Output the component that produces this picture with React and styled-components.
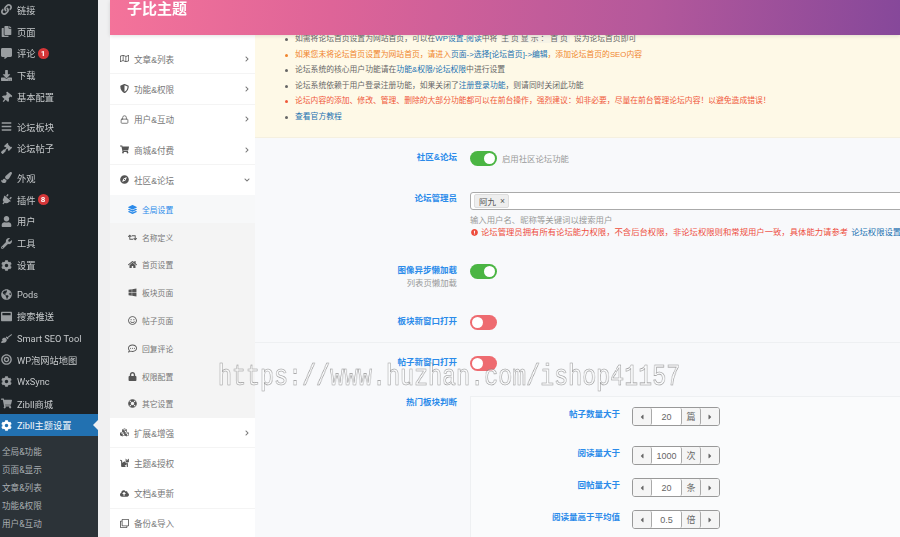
import React from 'react'
import styled, { createGlobalStyle } from 'styled-components'
import {
  FaLink, FaCopy, FaCommentAlt, FaDownload, FaThumbtack, FaBars, FaGavel, FaPaintBrush, FaPlug,
  FaUser, FaWrench, FaCog, FaGlobeAmericas, FaWindowMaximize, FaBroom, FaBullseye, FaShoppingCart,
  FaRegMap, FaShieldAlt, FaLock, FaCompass, FaRetweet, FaHome, FaWindows, FaRegSmile,
  FaRegCommentDots, FaLifeRing, FaCubes, FaCat, FaCloudUploadAlt, FaRegClone,
  FaChevronRight, FaChevronDown, FaCaretLeft, FaCaretRight, FaExclamationCircle, FaLayerGroup
} from 'react-icons/fa'
import { FiLock } from 'react-icons/fi'

const sans = `"Liberation Sans", "Noto Sans CJK SC", sans-serif`

const GlobalStyle = createGlobalStyle`
  html, body {
    margin: 0;
    padding: 0;
    height: 537px;
    overflow: hidden;
    background: #f0f0f1;
    font-family: ${sans};
  }
`

const Page = styled.div`
  position: relative;
  display: flex;
  width: 900px;
  height: 537px;
  overflow: hidden;
  filter: blur(0.35px);
`

const AdminMenu = styled.nav`
  width: 98px;
  flex: none;
  height: 537px;
  overflow: hidden;
  background: #1d2327;
  font-family: Roboto, "Noto Sans CJK SC", sans-serif;
  font-size: 9.25px;
`

const MenuList = styled.div`
  margin-top: -1px;
`

const MenuItem = styled.div`
  position: relative;
  display: flex;
  align-items: center;
  height: 21.8px;
  margin-top: ${p => (p.$gap ? '7.7px' : '0')};
  color: ${p => (p.$active ? '#f2f6fa' : '#c6c9cb')};
  background: ${p => (p.$active ? '#2271b1' : 'transparent')};
  white-space: nowrap;
`

const MenuIcon = styled.span`
  display: flex;
  justify-content: center;
  width: 12px;
  margin: 0 5px 0 0;
  color: ${p => (p.$active ? '#fff' : '#999da0')};
  font-size: 11px;
  transform: rotate(${p => (p.$tilt ? '40deg' : '0')});
`

const Badge = styled.span`
  display: inline-flex;
  align-items: center;
  justify-content: center;
  width: 11px;
  height: 11px;
  margin-left: 2px;
  border-radius: 50%;
  background: #d63638;
  color: #fff;
  font-size: 8px;
  font-weight: bold;
`

const ActiveArrow = styled.span`
  position: absolute;
  right: 0;
  top: 6px;
  border: 5px solid transparent;
  border-right-color: #f0f0f1;
  border-left-width: 0;
`

const SubMenu = styled.div`
  height: 100px;
  padding-top: 7px;
  background: #2c3338;
`

const SubItem = styled.div`
  height: 18px;
  padding-left: 2px;
  line-height: 18px;
  color: #a9aeb2;
  font-size: 8.6px;
`

const Panel = styled.div`
  flex: 1;
  min-width: 0;
  margin-left: 12px;
  display: flex;
  flex-direction: column;
`

const Header = styled.header`
  position: relative;
  z-index: 1;
  flex: none;
  height: 35px;
  padding-left: 17px;
  background: linear-gradient(95deg, #f4739a 0%, #de6498 28%, #b4589b 68%, #86489a 100%);
  box-shadow: 0 1px 4px rgba(0, 0, 0, 0.12);
`

const Title = styled.div`
  color: #fff;
  font-size: 15px;
  font-weight: bold;
  line-height: 17px;
`

const Body = styled.div`
  display: flex;
  flex: 1;
  min-height: 0;
`

const SideNav = styled.aside`
  width: 145px;
  flex: none;
  padding-top: 9px;
  background: #fff;
  color: #777;
  font-size: 8.6px;
`

const NavRow = styled.div`
  display: flex;
  align-items: center;
  height: 30.3px;
  box-sizing: border-box;
  padding: 0 5px 0 10px;
  border-bottom: 1px solid ${p => (p.$line ? '#f4f4f4' : 'transparent')};
`

const NavIcon = styled.span`
  display: flex;
  justify-content: center;
  width: 9px;
  margin-right: 5px;
  font-size: 9px;
  color: ${p => (p.$active ? '#2b8bea' : '#555')};
`

const NavArrow = styled.span`
  display: flex;
  margin-left: auto;
  font-size: 6px;
  color: #777;
`

const SubNav = styled.div`
  background: #f4f4f4;
`

const SubRow = styled.div`
  display: flex;
  align-items: center;
  height: 27.8px;
  padding-left: 18px;
  font-size: 7.8px;
  color: ${p => (p.$active ? '#2b8bea' : '#777')};
  background: ${p => (p.$active ? '#f7f8f9' : 'transparent')};
`

const Content = styled.main`
  flex: 1;
  min-width: 0;
  overflow: hidden;
  background: #f8f9fb;
`

const Notice = styled.ul`
  height: 107px;
  margin: -4px 0 0;
  padding: 0 0 0 40px;
  box-sizing: border-box;
  list-style: none;
  background: #fef9e7;
  border-bottom: 1px solid #f5f0e0;
  font-size: 7.8px;
  color: #666;
`

const NoticeItem = styled.li`
  position: relative;
  height: 15.6px;
  line-height: 15.6px;
  white-space: nowrap;
  color: ${p => p.$color || '#666'};

  &::before {
    content: '';
    position: absolute;
    left: -10px;
    top: 7px;
    width: 3px;
    height: 3px;
    border-radius: 50%;
    background: currentColor;
  }
`

const Link = styled.span`
  color: #2271b1;
`

const Code = styled.span`
  margin: 0 4px;
  background: #f6f3e6;
  letter-spacing: 2px;
`

const FormRow = styled.div`
  display: grid;
  grid-template-columns: 202px 1fr;
  column-gap: 13px;
  height: ${p => p.$height}px;
  box-sizing: border-box;
  padding-top: ${p => p.$top || 0}px;
  border-bottom: 1px solid ${p => (p.$line ? '#eef0f2' : 'transparent')};
`

const LabelBox = styled.div`
  text-align: right;
`

const Label = styled.div`
  color: #2b8bea;
  font-size: 8.5px;
  font-weight: bold;
  line-height: 13px;
`

const SubLabel = styled.div`
  color: #999;
  font-size: 8.4px;
  line-height: 12px;
`

const Inline = styled.div`
  display: flex;
  align-items: center;
  gap: 5px;
  height: 15px;
`

const Switch = styled.span`
  position: relative;
  display: block;
  flex: none;
  width: 27px;
  height: 15px;
  border-radius: 8px;
  background: ${p => (p.$on ? '#4bb543' : '#ee6b70')};

  &::after {
    content: '';
    position: absolute;
    top: 2px;
    left: ${p => (p.$on ? '14px' : '2px')};
    width: 11px;
    height: 11px;
    border-radius: 50%;
    background: #fff;
  }
`

const Hint = styled.div`
  color: #999;
  font-size: 8.4px;
  line-height: 12px;
  white-space: nowrap;
`

const TagInput = styled.div`
  display: flex;
  align-items: center;
  height: 18px;
  width: 500px;
  margin-bottom: 4px;
  padding-left: 3px;
  box-sizing: border-box;
  background: #fff;
  border: 1px solid #aaa;
  border-radius: 3px;
`

const Tag = styled.span`
  display: flex;
  align-items: center;
  gap: 4px;
  height: 12px;
  padding: 0 3px 0 4px;
  background: #eee;
  border: 1px solid #ddd;
  border-radius: 2px;
  color: #555;
  font-size: 8.5px;
`

const Danger = styled.div`
  display: flex;
  align-items: center;
  gap: 3px;
  padding-left: 1px;
  color: #ee4d3d;
  font-size: 8.35px;
  line-height: 12px;
  white-space: nowrap;
`

const SubPanel = styled.div`
  height: 160px;
  padding-top: 10px;
  box-sizing: border-box;
  border-top: 1px solid #eef0f2;
  border-left: 1px solid #eef0f2;
  background: #fafbfc;
`

const SpinRow = styled.div`
  display: grid;
  grid-template-columns: 149px 88px;
  column-gap: 12px;
  height: ${p => p.$height}px;
`

const SpinLabel = styled.div`
  padding-top: 1px;
  text-align: right;
  color: #2b8bea;
  font-size: 8.5px;
  font-weight: bold;
  line-height: 13px;
`

const Spinner = styled.div`
  display: grid;
  grid-template-columns: 19px 1fr 19px 18px;
  height: 19px;
  box-sizing: border-box;
  background: #fff;
  border: 1px solid #999;
  border-radius: 3px;
  color: #666;
  font-size: 9px;
`

const SpinCell = styled.span`
  display: flex;
  align-items: center;
  justify-content: center;
  background: ${p => (p.$shade ? '#f5f5f5' : '#fff')};
  border-right: 1px solid ${p => (p.$last ? 'transparent' : '#aaa')};
  border-radius: 2px;
`

const Watermark = styled.div`
  position: absolute;
  left: 218px;
  top: 360px;
  z-index: 2;
  font-family: "Liberation Mono", monospace;
  font-size: 30px;
  line-height: 34px;
  color: rgba(255, 255, 255, 0.45);
  -webkit-text-stroke: 0.6px rgba(120, 120, 120, 0.8);
  white-space: nowrap;
  transform: scaleX(0.778);
  transform-origin: left top;
  will-change: transform;
`

const menuTop = [
  { icon: FaLink, text: '链接' },
  { icon: FaCopy, text: '页面' },
  { icon: FaCommentAlt, text: '评论', badge: 1 },
  { icon: FaDownload, text: '下载' },
  { icon: FaThumbtack, text: '基本配置', tilt: true },
  { icon: FaBars, text: '论坛板块', gap: true },
  { icon: FaGavel, text: '论坛帖子' },
  { icon: FaPaintBrush, text: '外观', gap: true },
  { icon: FaPlug, text: '插件', badge: 8, tilt: true },
  { icon: FaUser, text: '用户' },
  { icon: FaWrench, text: '工具' },
  { icon: FaCog, text: '设置' },
  { icon: FaGlobeAmericas, text: 'Pods', gap: true },
  { icon: FaWindowMaximize, text: '搜索推送' },
  { icon: FaBroom, text: 'Smart SEO Tool' },
  { icon: FaBullseye, text: 'WP泡网站地图' },
  { icon: FaCog, text: 'WxSync' },
  { icon: FaShoppingCart, text: 'Zibll商城' },
  { icon: FaCog, text: 'Zibll主题设置', active: true }
]

const menuSub = ['全局&功能', '页面&显示', '文章&列表', '功能&权限', '用户&互动']

const navTop = [
  { icon: FaRegMap, text: '文章&列表', line: true, arrow: true },
  { icon: FaShieldAlt, text: '功能&权限', line: true, arrow: true },
  { icon: FiLock, text: '用户&互动', arrow: true },
  { icon: FaShoppingCart, text: '商城&付费', line: true, arrow: true },
  { icon: FaCompass, text: '社区&论坛', open: true }
]

const navSub = [
  { icon: FaLayerGroup, text: '全局设置', active: true },
  { icon: FaRetweet, text: '名称定义' },
  { icon: FaHome, text: '首页设置' },
  { icon: FaWindows, text: '板块页面' },
  { icon: FaRegSmile, text: '帖子页面' },
  { icon: FaRegCommentDots, text: '回复评论' },
  { icon: FaLock, text: '权限配置' },
  { icon: FaLifeRing, text: '其它设置' }
]

const navBottom = [
  { icon: FaCubes, text: '扩展&增强', arrow: true, line: true },
  { icon: FaCat, text: '主题&授权' },
  { icon: FaCloudUploadAlt, text: '文档&更新', line: true },
  { icon: FaRegClone, text: '备份&导入' }
]

const spins = [
  { label: '帖子数量大于', value: '20', unit: '篇', height: 39 },
  { label: '阅读量大于', value: '1000', unit: '次', height: 32 },
  { label: '回帖量大于', value: '20', unit: '条', height: 32 },
  { label: '阅读量高于平均值', value: '0.5', unit: '倍', height: 32 }
]

const renderNav = item => (
  <NavRow key={item.text} $line={item.line}>
    <NavIcon><item.icon /></NavIcon>
    {item.text}
    {item.open && <NavArrow><FaChevronDown /></NavArrow>}
    {item.arrow && <NavArrow><FaChevronRight /></NavArrow>}
  </NavRow>
)

const App = () => (
  <Page>
    <GlobalStyle />
    <AdminMenu>
      <MenuList>
        {menuTop.map(item => (
          <MenuItem key={item.text} $gap={item.gap} $active={item.active}>
            <MenuIcon $active={item.active} $tilt={item.tilt}><item.icon /></MenuIcon>
            {item.text}
            {item.badge && <Badge>{item.badge}</Badge>}
            {item.active && <ActiveArrow />}
          </MenuItem>
        ))}
      </MenuList>
      <SubMenu>
        {menuSub.map(text => <SubItem key={text}>{text}</SubItem>)}
      </SubMenu>
    </AdminMenu>

    <Panel>
      <Header><Title>子比主题</Title></Header>
      <Body>
        <SideNav>
          {navTop.map(renderNav)}
          <SubNav>
            {navSub.map(item => (
              <SubRow key={item.text} $active={item.active}>
                <NavIcon $active={item.active}><item.icon /></NavIcon>
                {item.text}
              </SubRow>
            ))}
          </SubNav>
          {navBottom.map(renderNav)}
        </SideNav>

        <Content>
          <Notice>
            <NoticeItem>如需将论坛首页设置为网站首页，可以在<Link>WP设置-阅读</Link>中将<Code>主页显示：首页</Code>设为论坛首页即可</NoticeItem>
            <NoticeItem $color='#f0842c'>如果您未将论坛首页设置为网站首页，请进入<Link>页面-&gt;选择[论坛首页]-&gt;编辑</Link>，添加论坛首页的SEO内容</NoticeItem>
            <NoticeItem>论坛系统的核心用户功能请在<Link>功能&amp;权限/论坛权限</Link>中进行设置</NoticeItem>
            <NoticeItem>论坛系统依赖于用户登录注册功能，如果关闭了<Link>注册登录功能</Link>，则请同时关闭此功能</NoticeItem>
            <NoticeItem $color='#f0583a'>论坛内容的添加、修改、管理、删除的大部分功能都可以在前台操作，强烈建议：如非必要，尽量在前台管理论坛内容！以避免造成错误！</NoticeItem>
            <NoticeItem><Link>查看官方教程</Link></NoticeItem>
          </Notice>

          <FormRow $height={48} $top={13}>
            <LabelBox><Label>社区&amp;论坛</Label></LabelBox>
            <Inline><Switch $on /><Hint>启用社区论坛功能</Hint></Inline>
          </FormRow>

          <FormRow $height={71} $top={6}>
            <LabelBox><Label>论坛管理员</Label></LabelBox>
            <div>
              <TagInput><Tag>阿九<span>×</span></Tag></TagInput>
              <Hint>输入用户名、昵称等关键词以搜索用户</Hint>
              <Danger>
                <FaExclamationCircle size={7} />
                论坛管理员拥有所有论坛能力权限，不含后台权限，非论坛权限则和常规用户一致，具体能力请参考<Link>论坛权限设置</Link>
              </Danger>
            </div>
          </FormRow>

          <FormRow $height={51} $top={7}>
            <LabelBox>
              <Label>图像异步懒加载</Label>
              <SubLabel>列表页懒加载</SubLabel>
            </LabelBox>
            <Switch $on />
          </FormRow>

          <FormRow $height={35} $top={7} $line>
            <LabelBox><Label>板块新窗口打开</Label></LabelBox>
            <Switch />
          </FormRow>

          <FormRow $height={53} $top={13}>
            <LabelBox><Label>帖子新窗口打开</Label></LabelBox>
            <Switch />
          </FormRow>

          <FormRow $height={160}>
            <LabelBox><Label>热门板块判断</Label></LabelBox>
            <SubPanel>
              {spins.map(spin => (
                <SpinRow key={spin.label} $height={spin.height}>
                  <SpinLabel>{spin.label}</SpinLabel>
                  <Spinner>
                    <SpinCell $shade><FaCaretLeft size={8} /></SpinCell>
                    <SpinCell>{spin.value}</SpinCell>
                    <SpinCell $shade>{spin.unit}</SpinCell>
                    <SpinCell $shade $last><FaCaretRight size={8} /></SpinCell>
                  </Spinner>
                </SpinRow>
              ))}
            </SubPanel>
          </FormRow>
        </Content>
      </Body>
    </Panel>

    <Watermark>https://www.huzhan.com/ishop41157</Watermark>
  </Page>
)

export default App
